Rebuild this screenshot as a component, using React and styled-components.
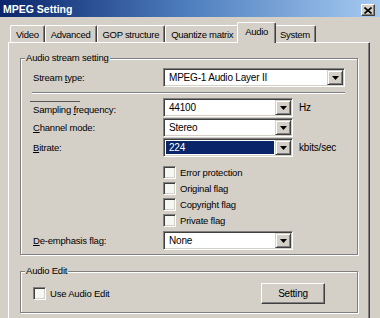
import React from "react";
import styled, { createGlobalStyle } from "styled-components";

const Global = createGlobalStyle`
  html, body { margin: 0; padding: 0; background: #d4d0c8; }
  body {
    font-family: "Liberation Sans", Arial, sans-serif;
    font-size: 9.5px;
    letter-spacing: -0.2px;
    color: #000;
  }
`;

const Window = styled.div`
  width: 380px;
  height: 318px;
  overflow: hidden;
  background: #d4d0c8;
  display: flex;
  flex-direction: column;
`;

const TitleBar = styled.div`
  height: 17px;
  flex: none;
  display: flex;
  align-items: center;
  justify-content: space-between;
  padding: 0 5px 0 3px;
  background: linear-gradient(to right, #0a246a, #4f7fbf 50%, #a6caf0);
  color: #fff;
  font-weight: bold;
  font-size: 10.5px;
  letter-spacing: 0;
`;

const CloseBtn = styled.div`
  width: 14px;
  height: 12px;
  margin-top: 3px;
  box-sizing: border-box;
  background: #d4d0c8;
  border: 1px solid;
  border-color: #fff #404040 #404040 #fff;
  box-shadow: inset -1px -1px 0 #808080;
  display: flex;
  align-items: center;
  justify-content: center;
`;

const Body = styled.div`
  padding: 5px 0 0 8px;
  display: flex;
  flex-direction: column;
`;

const TabRow = styled.div`
  display: flex;
  align-items: flex-end;
  height: 20px;
  padding-left: 2px;
  position: relative;
  z-index: 1;
`;

const Tab = styled.div`
  height: ${(p) => (p.$active ? "21px" : "17px")};
  margin: ${(p) => (p.$active ? "0 -2px -1px" : "0")};
  box-sizing: border-box;
  padding: ${(p) => (p.$active ? "0 7px 3px" : "0 5px")};
  display: flex;
  align-items: center;
  background: #d4d0c8;
  border-top: 1px solid #fff;
  border-left: 1px solid #fff;
  border-right: 1px solid #404040;
  box-shadow: inset -1px 0 0 #808080;
  border-radius: 2px 2px 0 0;
  position: relative;
  z-index: ${(p) => (p.$active ? 2 : 0)};
  font-size: 9.5px;
  letter-spacing: -0.3px;
`;

const Panel = styled.div`
  width: 362px;
  height: 290px;
  box-sizing: border-box;
  border: 1px solid;
  border-color: #fff #404040 #404040 #fff;
  box-shadow: inset -1px -1px 0 #808080;
  padding: 15px 0 0 11px;
  display: flex;
  flex-direction: column;
  gap: 16px;
`;

const Group = styled.div`
  position: relative;
  width: 338px;
  box-sizing: border-box;
  border: 1px solid #808080;
  box-shadow: inset 1px 1px 0 #fff, 1px 1px 0 #fff;
  padding: ${(p) => p.$pad};
`;

const Caption = styled.span`
  position: absolute;
  top: -7px;
  left: 4px;
  padding: 0 1px;
  background: #d4d0c8;
  line-height: 12px;
`;

const Row = styled.div`
  display: flex;
  align-items: center;
  height: 19px;
  margin-top: ${(p) => p.$top || 0}px;
`;

const Label = styled.div`
  width: 130px;
  flex: none;
  display: flex;
  flex-direction: column;
  justify-content: center;
`;

const Notch = styled.div`
  width: 50px;
  height: 1px;
  margin: 0 0 2px -3px;
  background: #555;
`;

const Divider = styled.div`
  height: 1px;
  background: #808080;
  border-bottom: 1px solid #fff;
  margin: 5px 0 4px -1px;
`;

const Combo = styled.div`
  width: ${(p) => p.$w}px;
  height: 19px;
  flex: none;
  box-sizing: border-box;
  border: 1px solid;
  border-color: #808080 #fff #fff #808080;
  box-shadow: inset 1px 1px 0 #404040, inset -1px -1px 0 #d4d0c8;
  background: #fff;
  display: flex;
  padding: 1px;
`;

const Value = styled.div`
  flex: 1;
  display: flex;
  align-items: center;
  padding-left: 3px;
  margin: 1px;
  font-size: 10px;
  background: ${(p) => (p.$sel ? "#0a246a" : "transparent")};
  color: ${(p) => (p.$sel ? "#fff" : "#000")};
`;

const ArrowBtn = styled.div`
  width: 16px;
  box-sizing: border-box;
  background: #d4d0c8;
  border: 1px solid;
  border-color: #d4d0c8 #404040 #404040 #d4d0c8;
  box-shadow: inset 1px 1px 0 #fff, inset -1px -1px 0 #808080;
  display: flex;
  align-items: center;
  justify-content: center;
`;

const Unit = styled.span`
  margin-left: 6px;
  font-size: 10px;
`;

const CheckList = styled.div`
  margin: 7px 0 0 130px;
  display: flex;
  flex-direction: column;
`;

const CheckRow = styled.label`
  display: flex;
  align-items: center;
  gap: 4px;
  height: 16px;
`;

const Box = styled.span`
  width: 13px;
  height: 13px;
  box-sizing: border-box;
  border: 1px solid;
  border-color: #808080 #fff #fff #808080;
  box-shadow: inset 1px 1px 0 #404040, inset -1px -1px 0 #d4d0c8;
  background: #f6f6f2;
  flex: none;
`;

const EditRow = styled.div`
  display: flex;
  align-items: center;
  justify-content: space-between;
`;

const Button = styled.button`
  width: 64px;
  height: 21px;
  box-sizing: border-box;
  background: #d4d0c8;
  border: 1px solid;
  border-color: #fff #404040 #404040 #fff;
  box-shadow: inset -1px -1px 0 #808080;
  font-family: inherit;
  font-size: 10px;
  letter-spacing: -0.2px;
  padding: 0;
  color: #000;
`;

const Arrow = () => (
  <svg width="7" height="4" viewBox="0 0 7 4">
    <path d="M0 0h7L3.5 4z" fill="#000" />
  </svg>
);

function Select({ w, value, sel }) {
  return (
    <Combo $w={w}>
      <Value $sel={sel}>{value}</Value>
      <ArrowBtn>
        <Arrow />
      </ArrowBtn>
    </Combo>
  );
}

const tabs = ["Video", "Advanced", "GOP structure", "Quantize matrix", "Audio", "System"];
const flags = ["Error protection", "Original flag", "Copyright flag", "Private flag"];

export default function App() {
  return (
    <Window>
      <Global />
      <TitleBar>
        <span>MPEG Setting</span>
        <CloseBtn>
          <svg width="8" height="7" viewBox="0 0 8 7">
            <path d="M0.5 0.5L7.5 6.5M7.5 0.5L0.5 6.5" stroke="#000" strokeWidth="1.6" />
          </svg>
        </CloseBtn>
      </TitleBar>
      <Body>
        <TabRow>
          {tabs.map((t) => (
            <Tab key={t} $active={t === "Audio"}>
              {t}
            </Tab>
          ))}
        </TabRow>
        <Panel>
          <Group $pad="9px 12px 4px 12px">
            <Caption>Audio stream setting</Caption>
            <Row>
              <Label>
                <span>
                  Stream <u>t</u>ype:
                </span>
              </Label>
              <Select w={182} value="MPEG-1 Audio Layer II" />
            </Row>
            <Divider />
            <Row>
              <Label>
                <Notch />
                <span>
                  Sampling <u>f</u>requency:
                </span>
              </Label>
              <Select w={130} value="44100" />
              <Unit>Hz</Unit>
            </Row>
            <Row $top={1}>
              <Label>
                <span>
                  <u>C</u>hannel mode:
                </span>
              </Label>
              <Select w={130} value="Stereo" />
            </Row>
            <Row $top={1}>
              <Label>
                <span>
                  <u>B</u>itrate:
                </span>
              </Label>
              <Select w={130} value="224" sel />
              <Unit>kbits/sec</Unit>
            </Row>
            <CheckList>
              {flags.map((f) => (
                <CheckRow key={f}>
                  <Box />
                  <span>{f}</span>
                </CheckRow>
              ))}
            </CheckList>
            <Row $top={3}>
              <Label>
                <span>
                  <u>D</u>e-emphasis flag:
                </span>
              </Label>
              <Select w={130} value="None" />
            </Row>
          </Group>
          <Group $pad="11px 32px 8px 12px">
            <Caption>Audio Edit</Caption>
            <EditRow>
              <CheckRow>
                <Box />
                <span>Use Audio Edit</span>
              </CheckRow>
              <Button>Setting</Button>
            </EditRow>
          </Group>
        </Panel>
      </Body>
    </Window>
  );
}
